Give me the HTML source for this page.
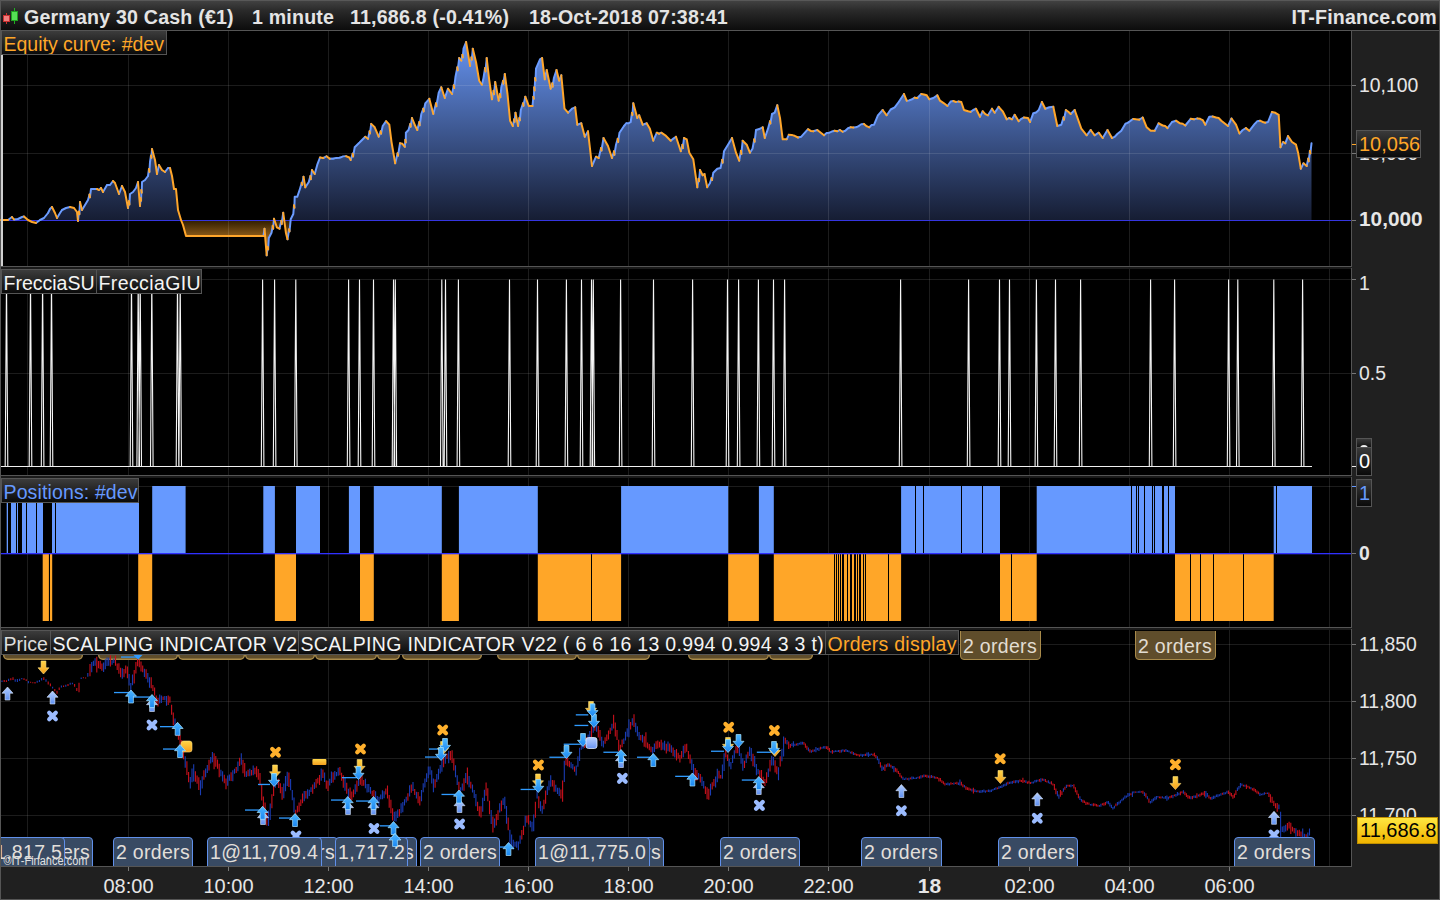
<!DOCTYPE html><html><head><meta charset="utf-8"><style>
*{box-sizing:border-box}
html,body{margin:0;padding:0}
body{width:1440px;height:900px;overflow:hidden;position:relative;background:#202020;font-family:"Liberation Sans",sans-serif}
.abs{position:absolute}
.ht{position:absolute;top:6px;font-weight:bold;font-size:19.6px;letter-spacing:0.2px;color:#e4e4e4;white-space:nowrap;line-height:22px}
.lbl{position:absolute;height:25px;background:linear-gradient(#3c3c3c,#0a0a0a);border:1px solid #555;font-size:19.5px;line-height:22px;white-space:nowrap;padding:2px 0 0 1.5px;overflow:hidden}
.ax{position:absolute;font-size:19.4px;color:#e6e6e6;white-space:nowrap;line-height:20px}
.ob{position:absolute;top:837px;height:40px;background:#384a63;border:1.4px solid #6090ea;border-radius:4px;font-size:19.5px;color:#e2dfda;line-height:29px;padding-left:2px;letter-spacing:0.3px;white-space:nowrap;overflow:hidden}
.tb{position:absolute;top:625px;height:35px;background:#5f4d2b;border:1.4px solid #a88a4a;border-radius:4px;font-size:19.5px;color:#e2ddd2;line-height:40px;padding-left:2px;letter-spacing:0.3px;white-space:nowrap;overflow:hidden}
.tl{position:absolute;top:876px;font-size:20px;color:#e6e6e6;line-height:20px;text-align:center;width:80px}
</style></head><body>

<svg class="abs" style="left:0;top:0" width="1440" height="900">
<defs>
<linearGradient id="hdrg" x1="0" y1="0" x2="0" y2="1"><stop offset="0" stop-color="#444"/><stop offset="0.35" stop-color="#2a2a2a"/><stop offset="1" stop-color="#0c0c0c"/></linearGradient>
<linearGradient id="gb" gradientUnits="userSpaceOnUse" x1="0" y1="42" x2="0" y2="220"><stop offset="0" stop-color="#6592ee"/><stop offset="1" stop-color="#161d33"/></linearGradient>
<linearGradient id="go" gradientUnits="userSpaceOnUse" x1="0" y1="220" x2="0" y2="238"><stop offset="0" stop-color="#2e1c00"/><stop offset="1" stop-color="#94601a"/></linearGradient>
<clipPath id="cabove"><rect x="0" y="0" width="1440" height="220.5"/></clipPath>
<clipPath id="cbelow"><rect x="0" y="220.5" width="1440" height="50"/></clipPath>
<clipPath id="p4"><rect x="1" y="631" width="1350" height="235"/></clipPath>
<linearGradient id="gup" x1="0" y1="0" x2="0" y2="1"><stop offset="0" stop-color="#b4cfff"/><stop offset="1" stop-color="#5f90f2"/></linearGradient>
<linearGradient id="gbr" x1="0" y1="0" x2="0" y2="1"><stop offset="0" stop-color="#4fb8ff"/><stop offset="1" stop-color="#1a86f2"/></linearGradient>
<linearGradient id="gor" x1="0" y1="0" x2="0" y2="1"><stop offset="0" stop-color="#ffd548"/><stop offset="1" stop-color="#f5a01e"/></linearGradient>
<linearGradient id="gsq" x1="0" y1="0" x2="0" y2="1"><stop offset="0" stop-color="#b8d0ff"/><stop offset="1" stop-color="#6a96f5"/></linearGradient>
<path id="aup" d="M0 -6.5 L5.5 -0.3 L2.4 -0.3 L2.4 6.5 L-2.4 6.5 L-2.4 -0.3 L-5.5 -0.3 Z"/>
<path id="adn" d="M0 6.5 L5.5 0.3 L2.4 0.3 L2.4 -6.5 L-2.4 -6.5 L-2.4 0.3 L-5.5 0.3 Z"/>
<path id="xx" d="M-3.3 -3.3 L3.3 3.3 M3.3 -3.3 L-3.3 3.3" stroke-width="4.2" stroke-linecap="round"/>
</defs>
<rect x="0" y="0" width="1440" height="30" fill="url(#hdrg)"/>
<rect x="0" y="0" width="1440" height="1" fill="#585858"/>
<rect x="0" y="30" width="1440" height="1" fill="#555"/>
<rect x="0" y="0" width="1" height="900" fill="#555"/><rect x="1439" y="0" width="1" height="900" fill="#555"/><rect x="0" y="899" width="1440" height="1" fill="#555"/>
<rect x="6" y="13" width="1" height="11" fill="#d03030"/><rect x="3.5" y="15.5" width="6" height="6" fill="#f08080" stroke="#c83030"/><rect x="14" y="8" width="1" height="16" fill="#20b020"/><rect x="11.5" y="11.5" width="6" height="9" fill="#55e055" stroke="#20a020"/>
<rect x="0.5" y="30.5" width="1351" height="236" fill="#000" stroke="#555" stroke-width="1"/>
<rect x="0.5" y="268.5" width="1351" height="207" fill="#000" stroke="#555" stroke-width="1"/>
<rect x="0.5" y="477.5" width="1351" height="150" fill="#000" stroke="#555" stroke-width="1"/>
<rect x="0.5" y="629.5" width="1351" height="237" fill="#000" stroke="#555" stroke-width="1"/>
<path d="M1,220.5 L1,220 5,220 8,220 12,217 14,219.5 18,219 22,217 24,216.5 28,220 32,222 36,223 40,220 42,219 44,218 48,213 50,209 52,207 55,213 57,218 60,213 62,210 66,208 70,207 74,208 77,212 78,221 80,202 82,210 85,205 88,200 91,189 95,189 97,189 99,190 101,188 103,192 107,185 110,185 113,181 115,183 119,194 122,186 125,192 128,208 130,194 133,192 136,188 138,182 140,206 142,182 145,180 148,176 150,162 152,149 155,160 157,174 159,165 162,170 165,172 168,168 170,168 172,176 174,189 176,189 178,210 181,220 183,225 186,236 263.5,236 264.5,228.7 266.7,255.3 268.8,238 271.5,232.7 274,218.8 276.8,227.3 279.5,228.7 283.2,212.7 285.9,232.7 287.5,239.3 290.7,219.3 293.3,214 294.7,196.7 297.3,196.7 300,188.7 303.5,176.7 305.3,187.3 308.8,182 312,170 314.7,174 317.3,164.7 320,157.5 349.3,157.5 350.7,160 354.7,147.3 360,142 365.3,136.7 368,138.8 371.2,123.9 374.7,127.3 378.7,136.7 382.7,126 386.1,121.2 389.3,124.7 391.5,142 395.2,163.3 400,143.3 404.8,146.8 405.9,132.7 408.5,130 412,118 414.7,124.7 417.3,130 421.3,114 425.3,103.3 429.3,98.8 433.3,114 438.7,92.7 441.3,87.3 444.8,98 448,88.7 452,94 455.5,76.7 459.2,58 461.3,60.7 463.5,48.7 466.1,42 470.1,66 472.8,48.7 476,62 479.2,80.7 481.9,84.7 483.5,78 486.7,58 489.3,80.7 492,99.3 495.2,82 498.7,100.7 501.3,87.3 504.8,74 507.5,94 510.1,120.7 512.8,126 515.5,112.7 518.1,126 520.8,110 525.3,96.7 528.8,106 532.5,106 536,68.7 540,59.3 542.1,58 544.8,79.3 546.7,70 550.7,88.7 553.9,78 556.5,70 559.2,80.7 561.3,75.3 564.5,108.7 568,112.7 572,108.7 575.2,107.3 577.3,124.7 581.3,123.3 584.8,136.7 588,131.3 592,166 596,156.7 598.7,158 603.5,138 608,146 612,158 616,144.7 619.5,132.7 624,126 628.5,123.3 630.7,122 633.3,103.3 637.3,118 639.2,115.3 642.7,124.7 646.7,123.3 649.9,128.7 653.3,140.7 656.8,132.7 661.3,132.7 665.3,135.3 670.7,140.7 676,136.7 680.8,151.3 684,138 686.7,139.3 689.3,152.7 693.3,159.3 697.3,187.3 700,170 702.7,175.3 704.5,174 707.2,187.3 709.9,183.3 713.3,172.7 717.3,168.7 720.5,168.1 724,151.3 728,144.7 732,138 736,152.7 739.2,160.7 742.7,140.7 746.7,144.7 749.9,152.7 752.5,148.7 756,130 760,128.7 762.7,127.3 764.8,138 768,128.7 772,114 774.7,112.7 777.3,105.2 780,118 782.7,139.3 786.7,139.3 788.8,134.8 794.7,135.9 801.3,136.7 808,129.2 813.3,131.3 817.3,130 824,135.3 829.3,132.7 837.3,131.3 845.3,130.8 850.7,127.3 856,127.3 864,123.9 869.3,127.3 874.1,124.7 877.9,115.3 882.7,110 886.7,115.3 890.7,109.5 894.7,107.3 898.7,102 904,94 906.7,100.7 912,99.3 917.3,98 921.3,94 926.7,95.3 929.3,99.3 933.3,98 937.3,95.3 940,100.7 944,103.3 947.5,106 950.7,101.5 956,102 961.3,102 964,110 968,111.3 973.3,110 976,108.7 980,116.7 982.7,111.3 988,115.3 992,108.7 994.7,112.7 998.7,106.8 1002.7,111.3 1006.7,119.3 1009.3,118 1012,119.3 1014.7,114.8 1018.7,121.2 1024,117.5 1028,118 1030.1,122 1033.3,113.2 1038.7,110 1041.9,102 1045.3,108.7 1049.3,107.3 1053.3,106.8 1057.3,126 1061.3,124.7 1065.9,110 1070.7,114 1074.7,110 1081.3,128.7 1086.7,135.3 1090.7,130 1094.7,135.3 1098.7,132.7 1102.7,138 1107.5,130 1112,138 1117.3,134 1121.3,130.8 1125.3,123.9 1130.7,120.7 1136,119.3 1142.7,117.5 1146.7,127.3 1150.7,130.8 1154.7,130.8 1158.7,123.3 1162.7,125.5 1167.5,128.1 1172,122 1176,120.7 1180,123.3 1185.3,125.5 1190.7,118.8 1197.3,118.5 1202.7,120.1 1205.3,124.7 1209.3,116.7 1216,117.5 1221.3,120.7 1228,126 1231.5,118.5 1236,124.7 1239.5,133.5 1242.7,130 1245.9,128.1 1249.3,130.8 1254.7,123.9 1260,120.7 1265.3,122.8 1268,122 1272,112.1 1278.7,114.8 1280.5,147.3 1283.2,142 1285.3,143.3 1288,136.1 1292,142 1296,144.7 1298.1,152.7 1300.8,168.7 1303.5,163.3 1306.7,166 1311.5,143.3 L1311.5,220.5 Z" fill="url(#gb)" clip-path="url(#cabove)"/>
<path d="M1,220.5 L1,220 5,220 8,220 12,217 14,219.5 18,219 22,217 24,216.5 28,220 32,222 36,223 40,220 42,219 44,218 48,213 50,209 52,207 55,213 57,218 60,213 62,210 66,208 70,207 74,208 77,212 78,221 80,202 82,210 85,205 88,200 91,189 95,189 97,189 99,190 101,188 103,192 107,185 110,185 113,181 115,183 119,194 122,186 125,192 128,208 130,194 133,192 136,188 138,182 140,206 142,182 145,180 148,176 150,162 152,149 155,160 157,174 159,165 162,170 165,172 168,168 170,168 172,176 174,189 176,189 178,210 181,220 183,225 186,236 263.5,236 264.5,228.7 266.7,255.3 268.8,238 271.5,232.7 274,218.8 276.8,227.3 279.5,228.7 283.2,212.7 285.9,232.7 287.5,239.3 290.7,219.3 293.3,214 294.7,196.7 297.3,196.7 300,188.7 303.5,176.7 305.3,187.3 308.8,182 312,170 314.7,174 317.3,164.7 320,157.5 349.3,157.5 350.7,160 354.7,147.3 360,142 365.3,136.7 368,138.8 371.2,123.9 374.7,127.3 378.7,136.7 382.7,126 386.1,121.2 389.3,124.7 391.5,142 395.2,163.3 400,143.3 404.8,146.8 405.9,132.7 408.5,130 412,118 414.7,124.7 417.3,130 421.3,114 425.3,103.3 429.3,98.8 433.3,114 438.7,92.7 441.3,87.3 444.8,98 448,88.7 452,94 455.5,76.7 459.2,58 461.3,60.7 463.5,48.7 466.1,42 470.1,66 472.8,48.7 476,62 479.2,80.7 481.9,84.7 483.5,78 486.7,58 489.3,80.7 492,99.3 495.2,82 498.7,100.7 501.3,87.3 504.8,74 507.5,94 510.1,120.7 512.8,126 515.5,112.7 518.1,126 520.8,110 525.3,96.7 528.8,106 532.5,106 536,68.7 540,59.3 542.1,58 544.8,79.3 546.7,70 550.7,88.7 553.9,78 556.5,70 559.2,80.7 561.3,75.3 564.5,108.7 568,112.7 572,108.7 575.2,107.3 577.3,124.7 581.3,123.3 584.8,136.7 588,131.3 592,166 596,156.7 598.7,158 603.5,138 608,146 612,158 616,144.7 619.5,132.7 624,126 628.5,123.3 630.7,122 633.3,103.3 637.3,118 639.2,115.3 642.7,124.7 646.7,123.3 649.9,128.7 653.3,140.7 656.8,132.7 661.3,132.7 665.3,135.3 670.7,140.7 676,136.7 680.8,151.3 684,138 686.7,139.3 689.3,152.7 693.3,159.3 697.3,187.3 700,170 702.7,175.3 704.5,174 707.2,187.3 709.9,183.3 713.3,172.7 717.3,168.7 720.5,168.1 724,151.3 728,144.7 732,138 736,152.7 739.2,160.7 742.7,140.7 746.7,144.7 749.9,152.7 752.5,148.7 756,130 760,128.7 762.7,127.3 764.8,138 768,128.7 772,114 774.7,112.7 777.3,105.2 780,118 782.7,139.3 786.7,139.3 788.8,134.8 794.7,135.9 801.3,136.7 808,129.2 813.3,131.3 817.3,130 824,135.3 829.3,132.7 837.3,131.3 845.3,130.8 850.7,127.3 856,127.3 864,123.9 869.3,127.3 874.1,124.7 877.9,115.3 882.7,110 886.7,115.3 890.7,109.5 894.7,107.3 898.7,102 904,94 906.7,100.7 912,99.3 917.3,98 921.3,94 926.7,95.3 929.3,99.3 933.3,98 937.3,95.3 940,100.7 944,103.3 947.5,106 950.7,101.5 956,102 961.3,102 964,110 968,111.3 973.3,110 976,108.7 980,116.7 982.7,111.3 988,115.3 992,108.7 994.7,112.7 998.7,106.8 1002.7,111.3 1006.7,119.3 1009.3,118 1012,119.3 1014.7,114.8 1018.7,121.2 1024,117.5 1028,118 1030.1,122 1033.3,113.2 1038.7,110 1041.9,102 1045.3,108.7 1049.3,107.3 1053.3,106.8 1057.3,126 1061.3,124.7 1065.9,110 1070.7,114 1074.7,110 1081.3,128.7 1086.7,135.3 1090.7,130 1094.7,135.3 1098.7,132.7 1102.7,138 1107.5,130 1112,138 1117.3,134 1121.3,130.8 1125.3,123.9 1130.7,120.7 1136,119.3 1142.7,117.5 1146.7,127.3 1150.7,130.8 1154.7,130.8 1158.7,123.3 1162.7,125.5 1167.5,128.1 1172,122 1176,120.7 1180,123.3 1185.3,125.5 1190.7,118.8 1197.3,118.5 1202.7,120.1 1205.3,124.7 1209.3,116.7 1216,117.5 1221.3,120.7 1228,126 1231.5,118.5 1236,124.7 1239.5,133.5 1242.7,130 1245.9,128.1 1249.3,130.8 1254.7,123.9 1260,120.7 1265.3,122.8 1268,122 1272,112.1 1278.7,114.8 1280.5,147.3 1283.2,142 1285.3,143.3 1288,136.1 1292,142 1296,144.7 1298.1,152.7 1300.8,168.7 1303.5,163.3 1306.7,166 1311.5,143.3 L1311.5,220.5 Z" fill="url(#go)" clip-path="url(#cbelow)"/>
<rect x="1" y="267" width="1350" height="2" fill="#1a1a1a"/><rect x="1" y="476" width="1350" height="2" fill="#1a1a1a"/><rect x="1" y="628" width="1350" height="2" fill="#1a1a1a"/>
<rect x="27" y="31" width="1" height="235" fill="rgba(255,255,255,0.11)"/>
<rect x="27" y="269" width="1" height="206" fill="rgba(255,255,255,0.11)"/>
<rect x="27" y="478" width="1" height="149" fill="rgba(255,255,255,0.11)"/>
<rect x="27" y="630" width="1" height="236" fill="rgba(255,255,255,0.11)"/>
<rect x="128" y="31" width="1" height="235" fill="rgba(255,255,255,0.11)"/>
<rect x="128" y="269" width="1" height="206" fill="rgba(255,255,255,0.11)"/>
<rect x="128" y="478" width="1" height="149" fill="rgba(255,255,255,0.11)"/>
<rect x="128" y="630" width="1" height="236" fill="rgba(255,255,255,0.11)"/>
<rect x="128" y="867" width="1" height="4" fill="#777"/>
<rect x="228" y="31" width="1" height="235" fill="rgba(255,255,255,0.11)"/>
<rect x="228" y="269" width="1" height="206" fill="rgba(255,255,255,0.11)"/>
<rect x="228" y="478" width="1" height="149" fill="rgba(255,255,255,0.11)"/>
<rect x="228" y="630" width="1" height="236" fill="rgba(255,255,255,0.11)"/>
<rect x="228" y="867" width="1" height="4" fill="#777"/>
<rect x="328" y="31" width="1" height="235" fill="rgba(255,255,255,0.11)"/>
<rect x="328" y="269" width="1" height="206" fill="rgba(255,255,255,0.11)"/>
<rect x="328" y="478" width="1" height="149" fill="rgba(255,255,255,0.11)"/>
<rect x="328" y="630" width="1" height="236" fill="rgba(255,255,255,0.11)"/>
<rect x="328" y="867" width="1" height="4" fill="#777"/>
<rect x="428" y="31" width="1" height="235" fill="rgba(255,255,255,0.11)"/>
<rect x="428" y="269" width="1" height="206" fill="rgba(255,255,255,0.11)"/>
<rect x="428" y="478" width="1" height="149" fill="rgba(255,255,255,0.11)"/>
<rect x="428" y="630" width="1" height="236" fill="rgba(255,255,255,0.11)"/>
<rect x="428" y="867" width="1" height="4" fill="#777"/>
<rect x="528" y="31" width="1" height="235" fill="rgba(255,255,255,0.11)"/>
<rect x="528" y="269" width="1" height="206" fill="rgba(255,255,255,0.11)"/>
<rect x="528" y="478" width="1" height="149" fill="rgba(255,255,255,0.11)"/>
<rect x="528" y="630" width="1" height="236" fill="rgba(255,255,255,0.11)"/>
<rect x="528" y="867" width="1" height="4" fill="#777"/>
<rect x="628" y="31" width="1" height="235" fill="rgba(255,255,255,0.11)"/>
<rect x="628" y="269" width="1" height="206" fill="rgba(255,255,255,0.11)"/>
<rect x="628" y="478" width="1" height="149" fill="rgba(255,255,255,0.11)"/>
<rect x="628" y="630" width="1" height="236" fill="rgba(255,255,255,0.11)"/>
<rect x="628" y="867" width="1" height="4" fill="#777"/>
<rect x="728" y="31" width="1" height="235" fill="rgba(255,255,255,0.11)"/>
<rect x="728" y="269" width="1" height="206" fill="rgba(255,255,255,0.11)"/>
<rect x="728" y="478" width="1" height="149" fill="rgba(255,255,255,0.11)"/>
<rect x="728" y="630" width="1" height="236" fill="rgba(255,255,255,0.11)"/>
<rect x="728" y="867" width="1" height="4" fill="#777"/>
<rect x="828" y="31" width="1" height="235" fill="rgba(255,255,255,0.11)"/>
<rect x="828" y="269" width="1" height="206" fill="rgba(255,255,255,0.11)"/>
<rect x="828" y="478" width="1" height="149" fill="rgba(255,255,255,0.11)"/>
<rect x="828" y="630" width="1" height="236" fill="rgba(255,255,255,0.11)"/>
<rect x="828" y="867" width="1" height="4" fill="#777"/>
<rect x="929" y="31" width="1" height="235" fill="rgba(255,255,255,0.11)"/>
<rect x="929" y="269" width="1" height="206" fill="rgba(255,255,255,0.11)"/>
<rect x="929" y="478" width="1" height="149" fill="rgba(255,255,255,0.11)"/>
<rect x="929" y="630" width="1" height="236" fill="rgba(255,255,255,0.11)"/>
<rect x="929" y="867" width="1" height="4" fill="#777"/>
<rect x="1029" y="31" width="1" height="235" fill="rgba(255,255,255,0.11)"/>
<rect x="1029" y="269" width="1" height="206" fill="rgba(255,255,255,0.11)"/>
<rect x="1029" y="478" width="1" height="149" fill="rgba(255,255,255,0.11)"/>
<rect x="1029" y="630" width="1" height="236" fill="rgba(255,255,255,0.11)"/>
<rect x="1029" y="867" width="1" height="4" fill="#777"/>
<rect x="1129" y="31" width="1" height="235" fill="rgba(255,255,255,0.11)"/>
<rect x="1129" y="269" width="1" height="206" fill="rgba(255,255,255,0.11)"/>
<rect x="1129" y="478" width="1" height="149" fill="rgba(255,255,255,0.11)"/>
<rect x="1129" y="630" width="1" height="236" fill="rgba(255,255,255,0.11)"/>
<rect x="1129" y="867" width="1" height="4" fill="#777"/>
<rect x="1229" y="31" width="1" height="235" fill="rgba(255,255,255,0.11)"/>
<rect x="1229" y="269" width="1" height="206" fill="rgba(255,255,255,0.11)"/>
<rect x="1229" y="478" width="1" height="149" fill="rgba(255,255,255,0.11)"/>
<rect x="1229" y="630" width="1" height="236" fill="rgba(255,255,255,0.11)"/>
<rect x="1229" y="867" width="1" height="4" fill="#777"/>
<rect x="1329" y="31" width="1" height="235" fill="rgba(255,255,255,0.11)"/>
<rect x="1329" y="269" width="1" height="206" fill="rgba(255,255,255,0.11)"/>
<rect x="1329" y="478" width="1" height="149" fill="rgba(255,255,255,0.11)"/>
<rect x="1329" y="630" width="1" height="236" fill="rgba(255,255,255,0.11)"/>
<rect x="1" y="85" width="1350" height="1" fill="rgba(255,255,255,0.11)"/>
<rect x="1" y="153" width="1350" height="1" fill="rgba(255,255,255,0.11)"/>
<rect x="1" y="279" width="1350" height="1" fill="rgba(255,255,255,0.11)"/>
<rect x="1" y="373" width="1350" height="1" fill="rgba(255,255,255,0.11)"/>
<rect x="1" y="486" width="1350" height="1" fill="rgba(255,255,255,0.11)"/>
<rect x="1" y="644" width="1350" height="1" fill="rgba(255,255,255,0.11)"/>
<rect x="1" y="701" width="1350" height="1" fill="rgba(255,255,255,0.11)"/>
<rect x="1" y="758" width="1350" height="1" fill="rgba(255,255,255,0.11)"/>
<rect x="1" y="815" width="1350" height="1" fill="rgba(255,255,255,0.11)"/>
<rect x="1352" y="85" width="4" height="1" fill="#777"/>
<rect x="1352" y="153" width="4" height="1" fill="#777"/>
<rect x="1352" y="220" width="4" height="1" fill="#777"/>
<rect x="1352" y="279" width="4" height="1" fill="#777"/>
<rect x="1352" y="373" width="4" height="1" fill="#777"/>
<rect x="1352" y="466" width="4" height="1" fill="#777"/>
<rect x="1352" y="553" width="4" height="1" fill="#777"/>
<rect x="1352" y="644" width="4" height="1" fill="#777"/>
<rect x="1352" y="701" width="4" height="1" fill="#777"/>
<rect x="1352" y="758" width="4" height="1" fill="#777"/>
<rect x="1352" y="815" width="4" height="1" fill="#777"/>
<rect x="1" y="220" width="1350" height="1" fill="#3535e0"/>
<path d="M8 220L12 217M14 219.5L18 219M18 219L22 217M22 217L24 216.5M36 223L40 220M40 220L42 219M42 219L44 218M44 218L48 213M48 213L50 209M50 209L52 207M57 218L60 213M60 213L62 210M62 210L66 208M66 208L70 207M78 221L79 211.5M79.4 214.18L80 202M82 210L85 205M85 205L88 200M88 200L89.5 194.5M89.9 197.34L91 189M91 189L95 189M95 189L97 189M99 190L101 188M103 192L107 185M107 185L110 185M110 185L113 181M119 194L122 186M128 208L129 201M129.4 204.39L130 194M130 194L133 192M133 192L136 188M136 188L138 182M140 206L140.67 198M141.07 200.7L141.33 190M141.73 192.76L142 182M142 182L145 180M145 180L148 176M148 176L149 169M149.4 171.88L150 162M150 162L151 155.5M151.4 157.78L152 149M157 174L159 165M165 172L168 168M168 168L170 168M263.5 236L264.5 228.7M266.7 255.3L267.75 246.65M268.15 249.42L268.8 238M268.8 238L271.5 232.7M271.5 232.7L272.75 225.75M273.15 228.69L274 218.8M279.5 228.7L281.35 220.7M281.75 223.89L283.2 212.7M287.5 239.3L289.1 229.3M289.5 231.44L290.7 219.3M290.7 219.3L293.3 214M293.3 214L294 205.35M294.4 207.81L294.7 196.7M294.7 196.7L297.3 196.7M297.3 196.7L300 188.7M300 188.7L301.75 182.7M302.15 184.84L303.5 176.7M305.3 187.3L308.8 182M308.8 182L310.4 176M310.8 179.21L312 170M314.7 174L317.3 164.7M317.3 164.7L320 157.5M323.26 158L326.51 156.31M329.77 158.75L333.02 158.71M333.02 158.71L336.28 157.9M336.28 157.9L339.53 157.8M339.53 157.8L342.79 156.61M342.79 156.61L346.04 156.24M350.7 160L352.7 153.65M353.1 156.44L354.7 147.3M354.7 147.3L360 142M360 142L365.3 136.7M368 138.8L369.6 131.35M370 133.44L371.2 123.9M378.7 136.7L380.7 131.35M381.1 133.64L382.7 126M382.7 126L386.1 121.2M395.2 163.3L397.6 153.3M398 155.66L400 143.3M404.8 146.8L405.35 139.75M405.75 142.45L405.9 132.7M405.9 132.7L408.5 130M408.5 130L410.25 124M410.65 126.66L412 118M417.3 130L419.3 122M419.7 125.26L421.3 114M421.3 114L423.3 108.65M423.7 111.43L425.3 103.3M425.3 103.3L429.3 98.8M433.3 114L436 103.35M436.4 106.31L438.7 92.7M438.7 92.7L441.3 87.3M444.8 98L448 88.7M452 94L453.75 85.35M454.15 88.1L455.5 76.7M455.5 76.7L457.35 67.35M457.75 70.34L459.2 58M461.3 60.7L462.4 54.7M462.8 57.39L463.5 48.7M463.5 48.7L466.1 42M470.1 66L471.45 57.35M471.85 59.77L472.8 48.7M481.9 84.7L483.5 78M483.5 78L485.1 68M485.5 71.5L486.7 58M492 99.3L493.6 90.65M494 94.14L495.2 82M498.7 100.7L500 94M500.4 97.26L501.3 87.3M501.3 87.3L503.05 80.65M503.45 83.71L504.8 74M512.8 126L514.15 119.35M514.55 121.82L515.5 112.7M518.1 126L519.45 118M519.85 120.34L520.8 110M520.8 110L523.05 103.35M523.45 105.78L525.3 96.7M532.5 106L533.38 96.67M533.77 98.78L534.25 87.35M534.65 90.5L535.12 78.03M535.52 80.63L536 68.7M536 68.7L540 59.3M540 59.3L542.1 58M544.8 79.3L546.7 70M550.7 88.7L552.3 83.35M552.7 86.62L553.9 78M553.9 78L556.5 70M559.2 80.7L561.3 75.3M568 112.7L572 108.7M572 108.7L575.2 107.3M577.3 124.7L581.3 123.3M584.8 136.7L588 131.3M592 166L596 156.7M598.7 158L601.1 148M601.5 150.58L603.5 138M612 158L614 151.35M614.4 154.79L616 144.7M616 144.7L617.75 138.7M618.15 141.97L619.5 132.7M619.5 132.7L624 126M624 126L626.25 123.35M626.25 123.35L628.5 123.3M628.5 123.3L630.7 122M630.7 122L632 112.65M632.4 114.96L633.3 103.3M637.3 118L639.2 115.3M642.7 124.7L646.7 123.3M653.3 140.7L656.8 132.7M659.05 133.77L661.3 132.7M670.7 140.7L673.35 138.62M673.35 138.62L676 136.7M680.8 151.3L682.4 144.65M682.8 148.12L684 138M697.3 187.3L698.65 178.65M699.05 181.25L700 170M702.7 175.3L704.5 174M707.2 187.3L709.9 183.3M709.9 183.3L711.6 178M712 180.11L713.3 172.7M713.3 172.7L717.3 168.7M717.3 168.7L720.5 168.1M720.5 168.1L722.25 159.7M722.65 162.64L724 151.3M724 151.3L728 144.7M728 144.7L732 138M739.2 160.7L740.95 150.7M741.35 153.87L742.7 140.7M749.9 152.7L752.5 148.7M752.5 148.7L754.25 139.35M754.65 141.75L756 130M756 130L760 128.7M760 128.7L762.7 127.3M764.8 138L768 128.7M768 128.7L770 121.35M770.4 123.48L772 114M772 114L774.7 112.7M774.7 112.7L777.3 105.2M786.7 139.3L788.8 134.8M798 137.51L801.3 136.7M801.3 136.7L808 129.2M813.3 131.3L817.3 130M824 135.3L826.65 133.01M826.65 133.01L829.3 132.7M829.3 132.7L831.97 131.57M831.97 131.57L834.63 130.73M837.3 131.3L839.97 129.99M842.63 131.74L845.3 130.8M845.3 130.8L848 128.21M848 128.21L850.7 127.3M853.35 127.45L856 127.3M856 127.3L858.67 126.03M858.67 126.03L861.33 124.23M861.33 124.23L864 123.9M869.3 127.3L871.7 125.04M871.7 125.04L874.1 124.7M874.1 124.7L877.9 115.3M877.9 115.3L882.7 110M886.7 115.3L890.7 109.5M890.7 109.5L894.7 107.3M894.7 107.3L898.7 102M898.7 102L904 94M906.7 100.7L909.35 100.37M909.35 100.37L912 99.3M912 99.3L914.65 97.65M917.3 98L921.3 94M929.3 99.3L933.3 98M933.3 98L937.3 95.3M947.5 106L950.7 101.5M950.7 101.5L953.35 101M956 102L958.65 101.4M970.65 111.87L973.3 110M973.3 110L976 108.7M980 116.7L982.7 111.3M988 115.3L992 108.7M994.7 112.7L998.7 106.8M1006.7 119.3L1009.3 118M1012 119.3L1014.7 114.8M1018.7 121.2L1021.35 118.84M1021.35 118.84L1024 117.5M1030.1 122L1033.3 113.2M1033.3 113.2L1036 112.6M1036 112.6L1038.7 110M1038.7 110L1041.9 102M1045.3 108.7L1049.3 107.3M1049.3 107.3L1053.3 106.8M1057.3 126L1061.3 124.7M1061.3 124.7L1063.6 117.35M1064 119.67L1065.9 110M1070.7 114L1074.7 110M1086.7 135.3L1090.7 130M1094.7 135.3L1098.7 132.7M1102.7 138L1107.5 130M1112 138L1114.65 136.92M1114.65 136.92L1117.3 134M1117.3 134L1121.3 130.8M1121.3 130.8L1125.3 123.9M1125.3 123.9L1128 122.67M1128 122.67L1130.7 120.7M1130.7 120.7L1133.35 118.96M1139.35 119.67L1142.7 117.5M1154.7 130.8L1158.7 123.3M1167.5 128.1L1172 122M1172 122L1176 120.7M1185.3 125.5L1190.7 118.8M1194 119.36L1197.3 118.5M1205.3 124.7L1209.3 116.7M1209.3 116.7L1212.65 116.57M1228 126L1231.5 118.5M1239.5 133.5L1242.7 130M1242.7 130L1245.9 128.1M1249.3 130.8L1254.7 123.9M1254.7 123.9L1257.35 121.23M1257.35 121.23L1260 120.7M1265.3 122.8L1268 122M1268 122L1272 112.1M1280.5 147.3L1283.2 142M1285.3 143.3L1288 136.1M1300.8 168.7L1303.5 163.3M1306.7 166L1308.3 158.43M1308.7 161.34L1309.9 150.87M1310.3 153.42L1311.5 143.3" stroke="#6b9cff" stroke-width="2" fill="none" stroke-linecap="round"/>
<path d="M1 220L5 220M5 220L8 220M12 217L14 219.5M24 216.5L28 220M28 220L32 222M32 222L36 223M52 207L55 213M55 213L57 218M70 207L74 208M74 208L77 212M77 212L78 221M79 211.5L79.4 214.18M80 202L82 210M89.5 194.5L89.9 197.34M97 189L99 190M101 188L103 192M113 181L115 183M115 183L119 194M122 186L125 192M125 192L128 208M129 201L129.4 204.39M138 182L140 206M140.67 198L141.07 200.7M141.33 190L141.73 192.76M149 169L149.4 171.88M151 155.5L151.4 157.78M152 149L155 160M155 160L157 174M159 165L162 170M162 170L165 172M170 168L172 176M172 176L174 189M174 189L176 189M176 189L178 210M178 210L181 220M181 220L183 225M183 225L186 236M186 236L263.5 236M264.5 228.7L266.7 255.3M267.75 246.65L268.15 249.42M272.75 225.75L273.15 228.69M274 218.8L276.8 227.3M276.8 227.3L279.5 228.7M281.35 220.7L281.75 223.89M283.2 212.7L285.9 232.7M285.9 232.7L287.5 239.3M289.1 229.3L289.5 231.44M294 205.35L294.4 207.81M301.75 182.7L302.15 184.84M303.5 176.7L305.3 187.3M310.4 176L310.8 179.21M312 170L314.7 174M320 157.5L323.26 158M326.51 156.31L329.77 158.75M346.04 156.24L349.3 157.5M349.3 157.5L350.7 160M352.7 153.65L353.1 156.44M365.3 136.7L368 138.8M369.6 131.35L370 133.44M371.2 123.9L374.7 127.3M374.7 127.3L378.7 136.7M380.7 131.35L381.1 133.64M386.1 121.2L389.3 124.7M389.3 124.7L391.5 142M391.5 142L395.2 163.3M397.6 153.3L398 155.66M400 143.3L402.4 143.83M402.4 143.83L404.8 146.8M405.35 139.75L405.75 142.45M410.25 124L410.65 126.66M412 118L414.7 124.7M414.7 124.7L417.3 130M419.3 122L419.7 125.26M423.3 108.65L423.7 111.43M429.3 98.8L433.3 114M436 103.35L436.4 106.31M441.3 87.3L444.8 98M448 88.7L452 94M453.75 85.35L454.15 88.1M457.35 67.35L457.75 70.34M459.2 58L461.3 60.7M462.4 54.7L462.8 57.39M466.1 42L470.1 66M471.45 57.35L471.85 59.77M472.8 48.7L476 62M476 62L479.2 80.7M479.2 80.7L481.9 84.7M485.1 68L485.5 71.5M486.7 58L489.3 80.7M489.3 80.7L492 99.3M493.6 90.65L494 94.14M495.2 82L498.7 100.7M500 94L500.4 97.26M503.05 80.65L503.45 83.71M504.8 74L507.5 94M507.5 94L510.1 120.7M510.1 120.7L512.8 126M514.15 119.35L514.55 121.82M515.5 112.7L518.1 126M519.45 118L519.85 120.34M523.05 103.35L523.45 105.78M525.3 96.7L528.8 106M528.8 106L532.5 106M533.38 96.67L533.77 98.78M534.25 87.35L534.65 90.5M535.12 78.03L535.52 80.63M542.1 58L544.8 79.3M546.7 70L550.7 88.7M552.3 83.35L552.7 86.62M556.5 70L559.2 80.7M561.3 75.3L564.5 108.7M564.5 108.7L568 112.7M575.2 107.3L577.3 124.7M581.3 123.3L584.8 136.7M588 131.3L592 166M596 156.7L598.7 158M601.1 148L601.5 150.58M603.5 138L608 146M608 146L612 158M614 151.35L614.4 154.79M617.75 138.7L618.15 141.97M632 112.65L632.4 114.96M633.3 103.3L637.3 118M639.2 115.3L642.7 124.7M646.7 123.3L649.9 128.7M649.9 128.7L653.3 140.7M656.8 132.7L659.05 133.77M661.3 132.7L665.3 135.3M665.3 135.3L670.7 140.7M676 136.7L680.8 151.3M682.4 144.65L682.8 148.12M684 138L686.7 139.3M686.7 139.3L689.3 152.7M689.3 152.7L693.3 159.3M693.3 159.3L697.3 187.3M698.65 178.65L699.05 181.25M700 170L702.7 175.3M704.5 174L707.2 187.3M711.6 178L712 180.11M722.25 159.7L722.65 162.64M732 138L736 152.7M736 152.7L739.2 160.7M740.95 150.7L741.35 153.87M742.7 140.7L746.7 144.7M746.7 144.7L749.9 152.7M754.25 139.35L754.65 141.75M762.7 127.3L764.8 138M770 121.35L770.4 123.48M777.3 105.2L780 118M780 118L782.7 139.3M782.7 139.3L786.7 139.3M788.8 134.8L791.75 134.91M791.75 134.91L794.7 135.9M794.7 135.9L798 137.51M808 129.2L810.65 130.92M810.65 130.92L813.3 131.3M817.3 130L824 135.3M834.63 130.73L837.3 131.3M839.97 129.99L842.63 131.74M850.7 127.3L853.35 127.45M864 123.9L866.65 126.2M866.65 126.2L869.3 127.3M882.7 110L886.7 115.3M904 94L906.7 100.7M914.65 97.65L917.3 98M921.3 94L924 94.44M924 94.44L926.7 95.3M926.7 95.3L929.3 99.3M937.3 95.3L940 100.7M940 100.7L944 103.3M944 103.3L947.5 106M953.35 101L956 102M958.65 101.4L961.3 102M961.3 102L964 110M964 110L968 111.3M968 111.3L970.65 111.87M976 108.7L980 116.7M982.7 111.3L985.35 114.09M985.35 114.09L988 115.3M992 108.7L994.7 112.7M998.7 106.8L1002.7 111.3M1002.7 111.3L1006.7 119.3M1009.3 118L1012 119.3M1014.7 114.8L1018.7 121.2M1024 117.5L1028 118M1028 118L1030.1 122M1041.9 102L1045.3 108.7M1053.3 106.8L1057.3 126M1063.6 117.35L1064 119.67M1065.9 110L1068.3 111.73M1068.3 111.73L1070.7 114M1074.7 110L1081.3 128.7M1081.3 128.7L1086.7 135.3M1090.7 130L1094.7 135.3M1098.7 132.7L1102.7 138M1107.5 130L1112 138M1133.35 118.96L1136 119.3M1136 119.3L1139.35 119.67M1142.7 117.5L1146.7 127.3M1146.7 127.3L1150.7 130.8M1150.7 130.8L1154.7 130.8M1158.7 123.3L1162.7 125.5M1162.7 125.5L1165.1 126.05M1165.1 126.05L1167.5 128.1M1176 120.7L1180 123.3M1180 123.3L1182.65 123.77M1182.65 123.77L1185.3 125.5M1190.7 118.8L1194 119.36M1197.3 118.5L1200 118.86M1200 118.86L1202.7 120.1M1202.7 120.1L1205.3 124.7M1212.65 116.57L1216 117.5M1216 117.5L1218.65 117.99M1218.65 117.99L1221.3 120.7M1221.3 120.7L1228 126M1231.5 118.5L1236 124.7M1236 124.7L1239.5 133.5M1245.9 128.1L1249.3 130.8M1260 120.7L1262.65 121.97M1262.65 121.97L1265.3 122.8M1272 112.1L1275.35 112.78M1275.35 112.78L1278.7 114.8M1278.7 114.8L1280.5 147.3M1283.2 142L1285.3 143.3M1288 136.1L1292 142M1292 142L1296 144.7M1296 144.7L1298.1 152.7M1298.1 152.7L1300.8 168.7M1303.5 163.3L1306.7 166M1308.3 158.43L1308.7 161.34M1309.9 150.87L1310.3 153.42" stroke="#ffa62b" stroke-width="2" fill="none" stroke-linecap="round"/>
<rect x="1" y="55" width="2" height="211" fill="#d0d0d0"/>
<rect x="1352" y="144" width="4" height="1" fill="#ffa628"/>
<path d="M5.2 466.5L6.5 279.5L7.8 466.5M29.2 466.5L30.5 279.5L31.8 466.5M41.3 466.5L42.6 279.5L43.9 466.5M50.2 466.5L51.5 279.5L52.8 466.5M130.2 466.5L131.5 279.5L132.8 466.5M136.9 466.5L138.2 279.5L139.5 466.5M138.9 466.5L140.2 279.5L141.5 466.5M150.5 466.5L151.8 279.5L153.1 466.5M176.2 466.5L177.5 279.5L178.8 466.5M178.9 466.5L180.2 279.5L181.5 466.5M261.3 466.5L262.6 279.5L263.9 466.5M273.3 466.5L274.6 279.5L275.9 466.5M294.5 466.5L295.8 279.5L297.1 466.5M347.3 466.5L348.6 279.5L349.9 466.5M358.2 466.5L359.5 279.5L360.8 466.5M372.2 466.5L373.5 279.5L374.8 466.5M392.2 466.5L393.5 279.5L394.8 466.5M394 466.5L395.3 279.5L396.6 466.5M440.5 466.5L441.8 279.5L443.1 466.5M444.2 466.5L445.5 279.5L446.8 466.5M457.1 466.5L458.4 279.5L459.7 466.5M508.2 466.5L509.5 279.5L510.8 466.5M536.2 466.5L537.5 279.5L538.8 466.5M565.1 466.5L566.4 279.5L567.7 466.5M580.2 466.5L581.5 279.5L582.8 466.5M590.2 466.5L591.5 279.5L592.8 466.5M592 466.5L593.3 279.5L594.6 466.5M619.3 466.5L620.6 279.5L621.9 466.5M652.2 466.5L653.5 279.5L654.8 466.5M691.3 466.5L692.6 279.5L693.9 466.5M726.2 466.5L727.5 279.5L728.8 466.5M737.3 466.5L738.6 279.5L739.9 466.5M757.1 466.5L758.4 279.5L759.7 466.5M772.2 466.5L773.5 279.5L774.8 466.5M783.3 466.5L784.6 279.5L785.9 466.5M899.3 466.5L900.6 279.5L901.9 466.5M967.3 466.5L968.6 279.5L969.9 466.5M998.2 466.5L999.5 279.5L1000.8 466.5M1008.2 466.5L1009.5 279.5L1010.8 466.5M1035.1 466.5L1036.4 279.5L1037.7 466.5M1054.2 466.5L1055.5 279.5L1056.8 466.5M1079.3 466.5L1080.6 279.5L1081.9 466.5M1149.3 466.5L1150.6 279.5L1151.9 466.5M1173.3 466.5L1174.6 279.5L1175.9 466.5M1227.3 466.5L1228.6 279.5L1229.9 466.5M1236.5 466.5L1237.8 279.5L1239.1 466.5M1272.5 466.5L1273.8 279.5L1275.1 466.5M1301.3 466.5L1302.6 279.5L1303.9 466.5" stroke="#f6f6f6" stroke-width="1.1" fill="none"/>
<rect x="1" y="466" width="1311" height="1" fill="#f0f0f0"/>
<rect x="1352" y="466" width="4" height="1" fill="#eee"/>
<rect x="6.7" y="486" width="1.3" height="67.5" fill="#6699ff"/>
<rect x="11" y="486" width="5" height="67.5" fill="#6699ff"/>
<rect x="17" y="486" width="1" height="67.5" fill="#6699ff"/>
<rect x="22" y="486" width="4" height="67.5" fill="#6699ff"/>
<rect x="27" y="486" width="9" height="67.5" fill="#6699ff"/>
<rect x="37" y="486" width="6" height="67.5" fill="#6699ff"/>
<rect x="52" y="486" width="3" height="67.5" fill="#6699ff"/>
<rect x="56" y="486" width="83" height="67.5" fill="#6699ff"/>
<rect x="152.2" y="486" width="33.4" height="67.5" fill="#6699ff"/>
<rect x="263.3" y="486" width="11.6" height="67.5" fill="#6699ff"/>
<rect x="296" y="486" width="24" height="67.5" fill="#6699ff"/>
<rect x="348.9" y="486" width="11.1" height="67.5" fill="#6699ff"/>
<rect x="373.8" y="486" width="68" height="67.5" fill="#6699ff"/>
<rect x="458.9" y="486" width="78.9" height="67.5" fill="#6699ff"/>
<rect x="621.1" y="486" width="107.1" height="67.5" fill="#6699ff"/>
<rect x="758.9" y="486" width="14.9" height="67.5" fill="#6699ff"/>
<rect x="901.1" y="486" width="98.9" height="67.5" fill="#6699ff"/>
<rect x="1036.7" y="486" width="138.3" height="67.5" fill="#6699ff"/>
<rect x="1273.7" y="486" width="38.3" height="67.5" fill="#6699ff"/>
<rect x="42.7" y="553.5" width="6.2" height="67.5" fill="#ffa628"/>
<rect x="50" y="553.5" width="2.2" height="67.5" fill="#ffa628"/>
<rect x="138.2" y="553.5" width="14" height="67.5" fill="#ffa628"/>
<rect x="274.9" y="553.5" width="21.1" height="67.5" fill="#ffa628"/>
<rect x="360" y="553.5" width="13.8" height="67.5" fill="#ffa628"/>
<rect x="441.8" y="553.5" width="17.1" height="67.5" fill="#ffa628"/>
<rect x="537.8" y="553.5" width="83.3" height="67.5" fill="#ffa628"/>
<rect x="728.2" y="553.5" width="30.7" height="67.5" fill="#ffa628"/>
<rect x="773.8" y="553.5" width="127.3" height="67.5" fill="#ffa628"/>
<rect x="1000" y="553.5" width="36.7" height="67.5" fill="#ffa628"/>
<rect x="1175" y="553.5" width="98.7" height="67.5" fill="#ffa628"/>
<rect x="915" y="486" width="1" height="67" fill="#000"/>
<rect x="923" y="486" width="1" height="67" fill="#000"/>
<rect x="961" y="486" width="1" height="67" fill="#000"/>
<rect x="982" y="486" width="1" height="67" fill="#000"/>
<rect x="1131" y="486" width="1" height="67" fill="#000"/>
<rect x="1136" y="486" width="1" height="67" fill="#000"/>
<rect x="1138" y="486" width="1" height="67" fill="#000"/>
<rect x="1144" y="486" width="1" height="67" fill="#000"/>
<rect x="1152" y="486" width="1" height="67" fill="#000"/>
<rect x="1154" y="486" width="1" height="67" fill="#000"/>
<rect x="1162" y="486" width="1" height="67" fill="#000"/>
<rect x="1163" y="486" width="1" height="67" fill="#000"/>
<rect x="1168" y="486" width="1" height="67" fill="#000"/>
<rect x="1276" y="486" width="1" height="67" fill="#000"/>
<rect x="591" y="554" width="1" height="67" fill="#000"/>
<rect x="834" y="554" width="1" height="67" fill="#000"/>
<rect x="836" y="554" width="1" height="67" fill="#000"/>
<rect x="838" y="554" width="1" height="67" fill="#000"/>
<rect x="840" y="554" width="1" height="67" fill="#000"/>
<rect x="842" y="554" width="1" height="67" fill="#000"/>
<rect x="843" y="554" width="1" height="67" fill="#000"/>
<rect x="847" y="554" width="1" height="67" fill="#000"/>
<rect x="850" y="554" width="1" height="67" fill="#000"/>
<rect x="851" y="554" width="1" height="67" fill="#000"/>
<rect x="854" y="554" width="1" height="67" fill="#000"/>
<rect x="855" y="554" width="1" height="67" fill="#000"/>
<rect x="857" y="554" width="1" height="67" fill="#000"/>
<rect x="859" y="554" width="1" height="67" fill="#000"/>
<rect x="860" y="554" width="1" height="67" fill="#000"/>
<rect x="863" y="554" width="1" height="67" fill="#000"/>
<rect x="865" y="554" width="1" height="67" fill="#000"/>
<rect x="888" y="554" width="1" height="67" fill="#000"/>
<rect x="1011" y="554" width="1" height="67" fill="#000"/>
<rect x="1190" y="554" width="1" height="67" fill="#000"/>
<rect x="1200" y="554" width="1" height="67" fill="#000"/>
<rect x="1213" y="554" width="1" height="67" fill="#000"/>
<rect x="1243" y="554" width="1" height="67" fill="#000"/>
<rect x="1" y="553" width="1350" height="1.3" fill="#3030ff"/>
<rect x="1352" y="486" width="4" height="1" fill="#6699ff"/>
<g clip-path="url(#p4)">
<rect x="3.7" y="620" width="78.6" height="39.3" rx="4" fill="#5f4d2b" stroke="#a88a4a" stroke-width="1.4"/>
<rect x="98.7" y="620" width="78.6" height="39.3" rx="4" fill="#5f4d2b" stroke="#a88a4a" stroke-width="1.4"/>
<rect x="178.7" y="620" width="65.6" height="39.3" rx="4" fill="#5f4d2b" stroke="#a88a4a" stroke-width="1.4"/>
<rect x="245.7" y="620" width="68.6" height="39.3" rx="4" fill="#5f4d2b" stroke="#a88a4a" stroke-width="1.4"/>
<rect x="315.7" y="620" width="60.6" height="39.3" rx="4" fill="#5f4d2b" stroke="#a88a4a" stroke-width="1.4"/>
<rect x="377.7" y="620" width="21.6" height="39.3" rx="4" fill="#5f4d2b" stroke="#a88a4a" stroke-width="1.4"/>
<rect x="402.7" y="620" width="78.6" height="39.3" rx="4" fill="#5f4d2b" stroke="#a88a4a" stroke-width="1.4"/>
<rect x="497.7" y="620" width="78.6" height="39.3" rx="4" fill="#5f4d2b" stroke="#a88a4a" stroke-width="1.4"/>
<rect x="577.7" y="620" width="71.6" height="39.3" rx="4" fill="#5f4d2b" stroke="#a88a4a" stroke-width="1.4"/>
<rect x="688.7" y="620" width="79.6" height="39.3" rx="4" fill="#5f4d2b" stroke="#a88a4a" stroke-width="1.4"/>
<rect x="769.7" y="620" width="42.6" height="39.3" rx="4" fill="#5f4d2b" stroke="#a88a4a" stroke-width="1.4"/>
<path d="M2 680.59v1.35M8.6 678.64v2.41M15.2 679.2v2.48M17.4 678.93v3.08M19.6 678.87v2.05M21.8 677.95v1.38M28.4 681.01v2.18M37.2 680.81v1.98M39.4 680.03v2.04M41.6 677.9v2.68M46 679.36v2.4M52.6 686.67v1.93M61.4 685.48v2.09M65.8 684.83v1.97M70.2 682.73v2.12M72.4 682.73v1.49M81.2 677.54v1.48M87.8 673.08v3.57M91.7 661.98v10.16M93.4 660.8v5.24M95.1 658.23v7.43M103.6 662.43v9.54M105.3 659.22v10.06M107 657.59v8.33M108.7 657.65v8.14M112.1 660.34v4.37M113.8 658.86v4.22M122.3 668.3v10.48M129.1 673.92v11.69M130.8 683.01v10.28M132.5 674.47v10.66M144.4 668.75v8.25M147.8 673.03v9.51M149.5 677.28v10.35M159.7 694.38v9.09M161.4 695.39v7.69M164.8 696.11v4.24M166.5 696.07v9.64M175 718.58v8.74M185.2 756.3v11.36M190.3 777.12v11.46M192 768.55v13.64M193.7 764.32v17.21M200.5 780.19v14.95M202.2 776.32v12.14M205.6 768.49v8.88M207.3 764.97v8.01M210.7 757.01v6.46M212.4 751.91v10.32M220.9 769.85v6.33M222.6 771.31v10.27M227.7 775.44v10.33M229.4 774.51v6.35M232.8 770.26v10.88M234.5 768.84v5M237.9 761.44v9.72M241.3 753.24v11.48M246.4 771.13v5.83M249.8 768.69v7.63M253.2 765.45v9.81M268.5 810.56v15.44M270.2 803.38v16.73M275.3 782.46v5.19M277 779.43v5.68M283.8 783.46v14.68M285.5 775.99v15.34M287.2 771.68v14.35M290.6 779.06v11.18M292.3 790.01v10.26M294 797.56v14.84M304.2 790.96v10.36M307.6 789.2v9.64M309.3 789.63v6.27M311 787.14v4.75M314.4 782.27v6.74M321.2 768.6v12.15M324.6 772.45v9.53M329.7 778.75v6.8M331.4 771.38v11.61M334.8 770.96v8.82M336.5 771.89v4.35M338.2 767.64v8.22M345 778.07v12.6M348.4 788.69v9.45M355.2 784.34v9.9M358.6 779.83v6.1M365.4 778.86v9.27M367.1 783.89v8.7M368.8 783.93v8.38M370.5 786.94v6.8M375.6 791.36v9.72M377.3 796.08v6.34M379 796.63v9.99M380.7 794.45v4.87M382.4 790.28v8.88M384.1 791.2v7.11M394.3 811.71v9.61M396 811.32v10.12M397.7 809.54v8.38M401.1 803.18v10.1M402.8 802.04v10.27M404.5 799.33v6.25M406.2 796.7v5.79M409.6 785.27v11.29M413 782.07v9.02M416.4 791.63v6.95M421.5 790.11v11.02M423.2 783.15v9.15M424.9 778.42v9.08M426.6 773.15v8.93M428.3 766.43v11.88M430 766.42v8.26M431.7 770.26v13.14M433.4 778.55v13.58M436.8 774.06v8.06M438.5 768.8v10.79M440.2 764.9v8.48M441.9 755.28v16.55M445.3 753.47v10.28M448.7 750.75v12.52M455.5 765.35v11.9M457.2 775.34v9.63M460.6 787.29v10.03M462.3 783.43v7.13M465.7 772.92v10.08M469.1 775.92v11.43M472.5 784.5v8.06M474.2 789.9v8.02M475.9 793.96v12.24M482.7 797.68v14.12M484.4 789.63v11.35M491.2 809.89v13.99M494.6 818.47v9.27M499.7 803.18v9.31M503.1 798.23v6.78M504.8 796.81v11.93M506.5 805.91v17.72M509.9 829.78v16.44M511.6 834.56v11.62M513.3 839.74v9.55M515 841.85v4.83M516.7 841.2v6.58M518.4 841.51v8.74M520.1 835.44v8.39M525.2 815.65v11.11M530.3 820.76v6.56M532 821.63v9.88M533.7 814.53v16.8M537.1 788.71v9.74M540.5 801.16v10.05M542.2 805.87v7.8M547.3 786.34v8.64M549 780.47v9.77M550.7 775.26v11.46M555.8 784.76v7.04M557.5 787.82v6.2M559.2 787.87v8.22M564.3 760.66v21.46M571.1 762.28v6.05M572.8 763.94v5.67M576.2 765.61v9.92M577.9 756.31v10.5M579.6 747.63v13.46M581.3 742.88v6.98M583 740.23v8.47M588.1 734.62v8.59M589.8 731.01v9.24M593.2 725.32v7.32M596.6 722.57v9.14M601.7 736.68v9.54M603.4 740.86v6.74M611.9 723.64v6.91M623.8 738.48v5.55M625.5 731.67v8.86M627.2 728.36v8.38M628.9 719.37v17.84M632.3 718.26v7.28M635.7 722.79v9.51M637.4 726.28v9.86M639.1 731.93v8.04M642.5 734.74v7.76M652.7 747.04v8.67M654.4 743.56v8.55M662.9 742.42v7.24M664.6 740.7v9.79M668 741.45v9.77M671.4 745.31v7.42M674.8 750.01v7.58M683.3 745.79v11.52M691.8 759.35v10.55M693.5 764.03v11.13M698.6 772.88v6.31M702 776.66v9.25M703.7 781.1v7.51M710.5 783.81v11.72M715.6 776.47v11.05M717.3 768.83v13.53M722.4 764.52v14.34M724.1 753.31v17.57M729.2 758.92v7.58M730.9 761.96v7.4M732.6 755.36v7.55M734.3 750.37v8.11M739.4 744.01v11.99M741.1 753.14v10.49M742.8 758.33v12.47M746.2 754.38v8.68M749.6 746.74v9.15M751.3 747.93v13.38M754.7 756.05v11.27M756.4 764.02v11.33M758.1 768.88v5.35M768.3 768.4v8.57M771.7 755.87v9.65M773.4 756.9v8.7M778.5 767.3v12.91M781.9 748.7v12.45M783.6 736.44v19.98M787 739.99v4.41M791.9 743.33v2.64M793.4 741.23v6.05M794.9 743.85v2.06M797.9 743.01v2.79M799.4 742.81v1.65M800.9 741.87v2.93M802.4 741.71v2.8M808.4 747.55v3.66M811.4 750.14v2.55M814.4 749.45v2M815.9 746.88v5.34M817.4 747.91v2.32M818.9 747.81v3.09M821.9 747.15v1.69M823.4 746.22v2.16M824.9 745.9v2.92M830.9 750.98v1.77M833.9 750.76v1.71M835.4 750.2v1.76M836.9 750.38v1.56M838.4 749.88v2.17M841.4 749.76v2.8M842.9 749.37v2.03M845.9 748.92v2.82M847.4 750.09v1.83M848.9 750.42v1.91M850.4 751.69v1.82M853.4 751.94v2.98M860.9 753.64v2.43M862.4 754.31v2.79M863.9 753.9v2.09M866.9 752.54v3.29M868.4 752.29v4.67M869.9 753.87v2.24M871.4 753.51v1.42M877.4 756.21v3.95M878.9 759v4.9M881.9 765.39v5.54M883.4 766.67v3M886.4 764.19v3.14M889.4 763.38v3.33M892.4 766.02v2.83M893.9 766.01v6.33M902.9 776.79v2.97M904.4 778.42v1.63M905.9 777.57v2.25M908.9 777.85v2.56M911.9 776.61v2.89M913.4 776.86v2.08M914.9 777.7v1.38M916.4 777.14v1.79M917.9 776.67v1.56M920.9 775.33v3.05M923.9 774.43v2.94M928.4 775.38v2.27M931.4 775.1v2.97M934.4 776.27v2.28M946.4 783.3v1.63M947.9 782.4v2.88M949.4 783.15v2.45M953.9 782.39v2.29M958.4 782.4v2.52M959.9 779.5v5.95M964.4 784.94v2.55M971.9 788.8v2.7M974.9 789.36v2.65M976.4 790.47v1.84M979.4 790.62v2.12M980.9 790.19v2.9M982.4 789.92v2.59M983.9 789.5v2.81M985.4 790.56v2.21M988.4 789.47v2.53M989.9 789.83v2.5M991.4 789.52v2.44M992.9 788.9v1.79M994.4 788.07v1.89M995.9 787.37v2.33M998.9 786.2v2.73M1000.4 786.06v1.85M1001.9 785.28v2.79M1003.4 784.32v2.34M1004.9 783.74v2.51M1006.4 782.61v3.12M1009.4 781.84v2.12M1010.9 781.56v2.22M1012.4 780.93v2.9M1015.4 780.25v2.98M1016.9 780.07v2.51M1018.4 780.13v3.03M1025.9 780.31v2.72M1031.9 781.65v1.9M1033.4 781.47v2.1M1034.9 779.91v2.61M1036.4 779.68v2.55M1037.9 779.7v1.76M1040.9 778.27v4M1043.9 778.83v2.07M1048.4 780.25v2.91M1049.9 781.8v2.14M1057.4 791.12v5.02M1058.9 794.59v4.26M1063.4 788.26v3.43M1066.4 784.81v3.15M1070.9 784.43v2.86M1072.4 784.9v1.38M1079.9 796.15v3.82M1081.4 799.09v2.74M1090.4 804.02v1.48M1091.9 803.69v1.98M1099.4 805.06v1.71M1100.9 803.68v3.08M1106.9 801.35v2.12M1108.4 801.11v3.25M1109.9 802.79v3.82M1111.4 804.67v3.45M1112.9 806.88v2.66M1114.4 805.67v2.81M1117.4 801.97v3.49M1118.9 801.59v2.98M1120.4 800.2v3.15M1121.9 798.82v2.41M1123.4 797.55v2.6M1124.9 795.5v3.17M1126.4 795.56v2.23M1127.9 793.01v3.99M1129.4 793.13v2.84M1132.4 791.49v5.42M1133.9 791.27v1.92M1136.9 791.39v1.38M1138.4 791.37v1.47M1139.9 790.87v2.11M1144.4 792.31v3.8M1147.4 796.23v3M1150.4 800.9v2.7M1151.9 799.22v3.63M1153.4 798.22v3.04M1154.9 796.87v3.49M1156.4 795.94v3.6M1157.9 796.04v1.58M1162.4 796.24v1.95M1163.9 797.18v1.69M1165.4 796.01v2.68M1166.9 795.48v5.25M1168.4 796.63v2.9M1172.9 794.9v3.29M1175.9 793.98v2.66M1177.4 792.06v3.74M1178.9 792.67v2.62M1183.4 790.27v3.6M1190.9 796.36v2.98M1193.9 795.43v2.44M1195.4 795.5v2.41M1198.4 794.55v1.87M1205.9 791.02v7.18M1207.4 792.97v3.72M1211.9 796.7v3.13M1213.4 795.85v3.15M1214.9 795.76v2.83M1216.4 794.43v2.47M1217.9 794.27v3.05M1219.4 794.19v1.94M1220.9 793.36v2.34M1223.9 792.31v2.46M1225.4 792.19v1.95M1226.9 790.63v2.79M1237.4 787.57v3.55M1238.9 786.03v3.5M1240.4 783.08v4.77M1241.9 783.57v2.15M1244.9 784.73v1.99M1250.9 787.07v2.21M1259.9 792.67v3.27M1261.4 793.68v1.48M1262.9 793.19v2.11M1264.4 792.17v2.65M1267.4 792.53v1.52M1278.9 804.56v4.73M1280.6 811.73v31.42M1282.3 826.56v5.41M1284 825.75v6.66M1285.7 824.68v6.78M1295.9 828.19v8.61M1302.7 828.4v9.7M1304.4 833.85v4.84M1307.8 832.61v10.9M1309.5 828.56v6.98" stroke="#1a3cb4" stroke-width="1.1" fill="none"/>
<path d="M4.2 680.1v1.81M6.4 680.25v1.76M10.8 678.33v2.03M13 677.33v2.63M24 678.37v1.61M26.2 679.3v1.82M30.6 681.74v1.01M32.8 682.18v1.01M35 681.94v1.51M43.8 677.27v2.72M48.2 681.6v2.86M50.4 683.61v2.66M54.8 688.93v2.38M57 690.86v2.91M59.2 687.47v2.56M63.6 685.61v1.44M68 684.09v1.84M74.6 684.02v2.75M76.8 688.06v2.87M79 682.63v9.58M83.4 677.37v0.99M85.6 677.39v1.11M90 663.88v12.32M96.8 656.72v15.9M98.5 660.95v7.41M100.2 660.74v8.15M101.9 663.52v7.27M110.4 655.27v11.24M115.5 655.4v10.32M117.2 663.54v6.46M118.9 663.29v10.58M120.6 667.78v9.49M124 669.11v8.07M125.7 665.56v7.94M127.4 666.46v11.85M134.2 670.05v13.39M135.9 661.96v11.58M137.6 658.52v7.77M139.3 659.79v7.45M141 661.44v10.07M142.7 665.6v6.66M146.1 669.13v9.64M151.2 677.27v11.06M152.9 684.91v6.02M154.6 687.44v7.96M156.3 695.52v8.15M158 697.77v8.63M163.1 696.55v3.54M168.2 695.54v9.39M169.9 696.58v6.29M171.6 704.72v9.93M173.3 712.55v12.75M176.7 723.37v12.81M178.4 729.44v10.27M180.1 734.92v12.61M181.8 740.1v12.44M183.5 746.19v13.09M186.9 761.17v13.9M188.6 771.89v10.25M195.4 771.29v10.4M197.1 775.44v8.26M198.8 777.24v12.84M203.9 770.27v9.36M209 759.84v10.77M214.1 753.26v16.05M215.8 755.91v10.8M217.5 759.49v9.2M219.2 763.77v13.6M224.3 774.63v8.68M226 778.43v10.71M231.1 772.35v8.66M236.2 766.92v6.05M239.6 757.63v8.46M243 759.63v13.6M244.7 762.9v13.86M248.1 769.83v6.48M251.5 769.91v5.66M254.9 767.8v6.39M256.6 766.18v11.18M258.3 769.12v10.6M260 773.02v12.58M261.7 784.18v16.36M263.4 796.56v12.96M265.1 802.4v14.24M266.8 811.86v13.6M271.9 794.28v14.05M273.6 780.63v15.26M278.7 778.64v9.42M280.4 783.23v10.06M282.1 786.97v12.76M288.9 772.39v14.62M295.7 809.8v9.32M297.4 805.66v6.76M299.1 802.38v9.39M300.8 799.41v6.68M302.5 793.62v9.74M305.9 790.9v7.6M312.7 784.53v9.25M316.1 778.98v8.76M317.8 777.74v5.65M319.5 774.97v10.1M322.9 769.49v8.44M326.3 780.54v8.2M328 780.82v10.17M333.1 772.36v10.16M339.9 766.92v8.38M341.6 772.7v8.11M343.3 775.32v12.51M346.7 782.82v11M350.1 787.43v12.43M351.8 791.56v8.44M353.5 789.62v7.54M356.9 780.42v11.3M360.3 773.93v10.7M362 775.49v10.47M363.7 780.1v5.6M372.2 790.77v5.36M373.9 789.91v8.08M385.8 788.49v5.95M387.5 785.62v12.86M389.2 794.91v12.85M390.9 799.78v13.51M392.6 808.17v12.22M399.4 809.09v7.53M407.9 793.35v7.42M411.3 784.48v8.15M414.7 788.91v6.18M418.1 792.1v11.12M419.8 796.2v9.33M435.1 779.15v8.52M443.6 753.67v13.55M447 753.56v5.22M450.4 750.97v9.38M452.1 750.28v12.7M453.8 758.54v11.88M458.9 781.87v13.52M464 778.27v12.49M467.4 767.62v16.92M470.8 781.78v6.63M477.6 801.83v9.25M479.3 806.29v10.05M481 806.2v11.34M486.1 782.57v13.12M487.8 788.24v12.95M489.5 800.72v13.57M492.9 816.62v15.85M496.3 814.11v11.31M498 810.21v9.83M501.4 800.51v10.66M508.2 817.55v12.79M521.8 830v9.55M523.5 825.77v9.28M526.9 815.76v6.97M528.6 815.02v9.47M535.4 801.63v16.07M538.8 796.13v12.04M543.9 799.68v9.53M545.6 790.58v13.15M552.4 779.93v6.5M554.1 780.33v11.37M560.9 789.56v8.9M562.6 780.54v21.11M566 756.42v8.85M567.7 757.76v8.43M569.4 760.96v6.28M574.5 766.6v5.18M584.7 737.89v10.16M586.4 737.28v9.13M591.5 726.51v10.82M594.9 725.12v5.61M598.3 725.99v11.42M600 729.9v10.95M605.1 737.19v6.51M606.8 734.43v6.66M608.5 730.62v8.83M610.2 727.82v6.15M613.6 714.7v13.81M615.3 722.44v14.1M617 730.07v10.04M618.7 739.84v11.1M620.4 744.8v5.65M622.1 739.48v7.78M630.6 722.11v7.43M634 714.13v12.91M640.8 735.05v5.46M644.2 736.21v10.6M645.9 732.27v15.26M647.6 742.5v5.91M649.3 743.98v6.26M651 746.6v5.68M656.1 741.2v7.84M657.8 740.56v7.85M659.5 741.68v5.9M661.2 739.74v10.5M666.3 743.67v9.77M669.7 743.48v8.31M673.1 747.44v8.7M676.5 748.88v11.6M678.2 752.68v5.7M679.9 754.88v7.67M681.6 750.96v7.66M685 744.13v9.05M686.7 743.83v8.02M688.4 750.96v7.95M690.1 754.58v8.87M695.2 767.9v12.72M696.9 769.88v10.69M700.3 773.89v8.73M705.4 786.13v7.84M707.1 787.37v11.99M708.8 788.65v11M712.2 782.33v7.18M713.9 779.1v7.22M719 770.72v7.69M720.7 774.9v3.56M725.8 745.95v11.49M727.5 754.43v6.61M736 746.09v7.25M737.7 740.69v12.53M744.5 760.73v7.37M747.9 751.85v6.46M753 753.77v12.45M759.8 770.31v6.95M761.5 770.06v10.9M763.2 776.72v7.37M764.9 778.91v7.2M766.6 772.18v10.93M770 759.73v11.84M775.1 760.14v12.24M776.8 766.25v8.02M780.2 756.27v10.32M785.3 737.66v6.08M788.7 741.44v7.58M790.4 744.03v3.74M796.4 743.59v1.97M803.9 742.02v2.78M805.4 743.45v4.21M806.9 745.67v3.97M809.9 749.15v3.28M812.9 749.62v2.4M820.4 746.71v2.84M826.4 746.22v2.82M827.9 746.21v3.72M829.4 748.08v3.6M832.4 749.97v3.85M839.9 750.09v2.77M844.4 749.8v2.11M851.9 751.17v2.63M854.9 753.05v2.02M856.4 753.65v2.04M857.9 753.99v1.85M859.4 754.47v2.21M865.4 753.75v2.29M872.9 753.68v1.96M874.4 752.79v3.77M875.9 755.04v3.07M880.4 762.24v5.18M884.9 764.57v6.39M887.9 763.18v3.52M890.9 764.84v2.67M895.4 767.74v4.08M896.9 768.41v4.17M898.4 770.99v2.99M899.9 772.92v3.84M901.4 775.4v2.87M907.4 778.32v1.47M910.4 777.47v1.87M919.4 776.29v2.57M922.4 775.32v2.28M925.4 774.76v2.19M926.9 774.84v2.96M929.9 775.56v2.62M932.9 775.76v2.01M935.9 776.79v1.89M937.4 777.11v1.6M938.9 777.66v3.84M940.4 777.99v3.57M941.9 780.19v2.7M943.4 781.15v3.18M944.9 782.78v2.76M950.9 782.18v2.62M952.4 782.97v1.35M955.4 782.56v1.42M956.9 781.85v2.71M961.4 781.81v3.69M962.9 784.16v3.08M965.9 786.13v3.53M967.4 787.33v2.73M968.9 787.61v2.97M970.4 788.56v1.92M973.4 787.69v5.69M977.9 790.24v2.03M986.9 790.13v1.61M997.4 787.52v1.76M1007.9 781.85v2.55M1013.9 780.47v2.53M1019.9 779.6v2.13M1021.4 780.06v1.88M1022.9 777.77v5.31M1024.4 780.22v2.15M1027.4 781.4v2.42M1028.9 780.75v2.77M1030.4 782.02v1.96M1039.4 778.89v2.96M1042.4 778.52v2.28M1045.4 779.07v2.97M1046.9 780.76v1.83M1051.4 781.35v3.09M1052.9 783.4v2.14M1054.4 784.07v5.99M1055.9 788.52v5.77M1060.4 790v6.8M1061.9 791.22v3.74M1064.9 786.83v2.97M1067.9 784.7v1.72M1069.4 784.86v1.77M1073.9 784.24v4.28M1075.4 787.32v4.84M1076.9 790.3v4.41M1078.4 793.73v4.64M1082.9 799.66v3.09M1084.4 800.52v2.48M1085.9 801.67v3.34M1087.4 802.32v2.14M1088.9 802.47v2.24M1093.4 803.37v2.86M1094.9 803.57v2.29M1096.4 804v2.43M1097.9 804.86v1.89M1102.4 803.27v2.02M1103.9 802.83v3.02M1105.4 802.04v3.14M1115.9 803.54v2.66M1130.9 793.34v1.93M1135.4 791.43v1.26M1141.4 791.35v1.26M1142.9 790.69v2.95M1145.9 793.34v4.07M1148.9 798.47v4.19M1159.4 796.42v1.81M1160.9 796.46v2.08M1169.9 796.01v2.25M1171.4 795.21v2.49M1174.4 794.4v1.8M1180.4 791.6v3.69M1181.9 791.32v1.85M1184.9 791.72v3.44M1186.4 793.28v3.66M1187.9 794.97v3.52M1189.4 795.76v3.04M1192.4 796.01v3.22M1196.9 793.31v4.83M1199.9 793.79v2.86M1201.4 792.57v3.05M1202.9 792.49v2.41M1204.4 790.92v5.53M1208.9 795.3v3.23M1210.4 796.93v2.55M1222.4 792.78v1.86M1228.4 790.6v3.45M1229.9 792.1v3.51M1231.4 792.89v3.51M1232.9 794.9v3.75M1234.4 793.4v4.39M1235.9 790.3v4.64M1243.4 784.65v1.73M1246.4 784.6v4.46M1247.9 785.87v1.74M1249.4 786.42v2.26M1252.4 788.37v2.17M1253.9 787.64v3.6M1255.4 789.06v3.22M1256.9 790.53v3.08M1258.4 791.41v2.84M1265.9 792.66v1.41M1268.9 792.52v4.6M1270.4 794.13v8.29M1272.1 796.71v6.21M1273.8 800.65v5.35M1275.5 803.32v4.98M1277.2 803.05v8.8M1287.4 823.06v7.49M1289.1 821.75v6.75M1290.8 822.83v11.24M1292.5 826.68v4.85M1294.2 828.11v5.19M1297.6 830.18v5.99M1299.3 829.7v6.45M1301 831.59v5.24M1306.1 834.19v6.39" stroke="#c8101c" stroke-width="1.1" fill="none"/>
<rect x="114" y="691.9" width="18" height="1.3" fill="#2f9bff"/>
<rect x="132" y="696.4" width="18" height="1.3" fill="#2f9bff"/>
<rect x="160" y="726" width="15" height="1.3" fill="#2f9bff"/>
<rect x="163" y="748.4" width="17" height="1.3" fill="#2f9bff"/>
<rect x="258" y="783.8" width="12" height="1.3" fill="#2f9bff"/>
<rect x="245" y="809.4" width="15" height="1.3" fill="#2f9bff"/>
<rect x="279" y="817.4" width="14" height="1.3" fill="#2f9bff"/>
<rect x="342" y="777" width="16" height="1.3" fill="#2f9bff"/>
<rect x="331" y="799.4" width="17" height="1.3" fill="#2f9bff"/>
<rect x="356" y="800.4" width="15" height="1.3" fill="#2f9bff"/>
<rect x="380" y="825.2" width="13.5" height="1.3" fill="#2f9bff"/>
<rect x="429" y="748.4" width="11" height="1.3" fill="#2f9bff"/>
<rect x="425" y="756.4" width="14" height="1.3" fill="#2f9bff"/>
<rect x="441.5" y="793.8" width="16.5" height="1.3" fill="#2f9bff"/>
<rect x="493" y="846.4" width="15" height="1.3" fill="#2f9bff"/>
<rect x="520.6" y="788.8" width="15" height="1.3" fill="#2f9bff"/>
<rect x="549.4" y="756.6" width="16.3" height="1.3" fill="#2f9bff"/>
<rect x="563.7" y="743.6" width="17.1" height="1.3" fill="#2f9bff"/>
<rect x="574.5" y="724.8" width="13.8" height="1.3" fill="#2f9bff"/>
<rect x="575.8" y="714.2" width="12.5" height="1.3" fill="#2f9bff"/>
<rect x="603.4" y="751.6" width="15.1" height="1.3" fill="#2f9bff"/>
<rect x="637" y="756.6" width="15.6" height="1.3" fill="#2f9bff"/>
<rect x="675.2" y="775.7" width="15.1" height="1.3" fill="#2f9bff"/>
<rect x="711" y="750.6" width="13" height="1.3" fill="#2f9bff"/>
<rect x="756.8" y="751.6" width="15.1" height="1.3" fill="#2f9bff"/>
<rect x="741.8" y="779.4" width="15" height="1.3" fill="#2f9bff"/>
<rect x="121" y="656.4" width="17" height="1.3" fill="#2f9bff"/>
<use href="#adn" transform="translate(43.5 667.5)" fill="url(#gor)" stroke="#ffe080" stroke-width="0.6"/>
<use href="#aup" transform="translate(7.5 693.5)" fill="url(#gup)" stroke="#e0ecff" stroke-width="0.6"/>
<use href="#aup" transform="translate(52.5 697.5)" fill="url(#gup)" stroke="#e0ecff" stroke-width="0.6"/>
<use href="#xx" transform="translate(52.5 716)" stroke="#9cbcff"/>
<use href="#aup" transform="translate(131 696.5)" fill="url(#gbr)" stroke="#a8e4ff" stroke-width="0.7"/>
<use href="#aup" transform="translate(152 705)" fill="url(#gup)" stroke="#e0ecff" stroke-width="0.6"/>
<use href="#aup" transform="translate(152 701)" fill="url(#gbr)" stroke="#a8e4ff" stroke-width="0.7"/>
<use href="#xx" transform="translate(152 725)" stroke="#9cbcff"/>
<use href="#aup" transform="translate(177.6 728.8)" fill="url(#gbr)" stroke="#a8e4ff" stroke-width="0.7"/>
<rect x="181" y="741" width="11" height="11" rx="2.5" fill="url(#gor)" stroke="#ffe080" stroke-width="0.6"/>
<use href="#aup" transform="translate(180 751)" fill="url(#gbr)" stroke="#a8e4ff" stroke-width="0.7"/>
<use href="#xx" transform="translate(275.5 752.2)" stroke="#ffb02c"/>
<use href="#adn" transform="translate(275 771.5)" fill="url(#gor)" stroke="#ffe080" stroke-width="0.6"/>
<use href="#adn" transform="translate(274 780)" fill="url(#gbr)" stroke="#a8e4ff" stroke-width="0.7"/>
<use href="#aup" transform="translate(263 818)" fill="url(#gup)" stroke="#e0ecff" stroke-width="0.6"/>
<use href="#aup" transform="translate(262.6 812.8)" fill="url(#gbr)" stroke="#a8e4ff" stroke-width="0.7"/>
<use href="#aup" transform="translate(295 820)" fill="url(#gbr)" stroke="#a8e4ff" stroke-width="0.7"/>
<use href="#xx" transform="translate(296 836)" stroke="#9cbcff"/>
<rect x="312.4" y="759" width="14" height="6" rx="1" fill="url(#gor)"/>
<use href="#xx" transform="translate(360.5 749)" stroke="#ffb02c"/>
<use href="#adn" transform="translate(359.6 766)" fill="url(#gor)" stroke="#ffe080" stroke-width="0.6"/>
<use href="#adn" transform="translate(358.5 773)" fill="url(#gbr)" stroke="#a8e4ff" stroke-width="0.7"/>
<use href="#aup" transform="translate(348 808)" fill="url(#gup)" stroke="#e0ecff" stroke-width="0.6"/>
<use href="#aup" transform="translate(347.7 803)" fill="url(#gbr)" stroke="#a8e4ff" stroke-width="0.7"/>
<use href="#aup" transform="translate(373.5 808)" fill="url(#gup)" stroke="#e0ecff" stroke-width="0.6"/>
<use href="#aup" transform="translate(373.5 803)" fill="url(#gbr)" stroke="#a8e4ff" stroke-width="0.7"/>
<use href="#xx" transform="translate(374 828.5)" stroke="#9cbcff"/>
<use href="#aup" transform="translate(393.5 828)" fill="url(#gbr)" stroke="#a8e4ff" stroke-width="0.7"/>
<use href="#aup" transform="translate(395 840)" fill="url(#gbr)" stroke="#a8e4ff" stroke-width="0.7"/>
<use href="#xx" transform="translate(442.7 730)" stroke="#ffb02c"/>
<use href="#adn" transform="translate(443 748)" fill="url(#gor)" stroke="#ffe080" stroke-width="0.6"/>
<use href="#adn" transform="translate(445 745)" fill="url(#gbr)" stroke="#a8e4ff" stroke-width="0.7"/>
<use href="#adn" transform="translate(441 754)" fill="url(#gbr)" stroke="#a8e4ff" stroke-width="0.7"/>
<use href="#aup" transform="translate(459.5 806)" fill="url(#gup)" stroke="#e0ecff" stroke-width="0.6"/>
<use href="#aup" transform="translate(459 796.5)" fill="url(#gbr)" stroke="#a8e4ff" stroke-width="0.7"/>
<use href="#xx" transform="translate(459.6 824)" stroke="#9cbcff"/>
<use href="#aup" transform="translate(508.5 849)" fill="url(#gbr)" stroke="#a8e4ff" stroke-width="0.7"/>
<use href="#xx" transform="translate(538.4 765)" stroke="#ffb02c"/>
<use href="#adn" transform="translate(538 780.5)" fill="url(#gor)" stroke="#ffe080" stroke-width="0.6"/>
<use href="#adn" transform="translate(538.3 786)" fill="url(#gbr)" stroke="#a8e4ff" stroke-width="0.7"/>
<use href="#adn" transform="translate(566.5 752)" fill="url(#gbr)" stroke="#a8e4ff" stroke-width="0.7"/>
<use href="#adn" transform="translate(583 740)" fill="url(#gbr)" stroke="#a8e4ff" stroke-width="0.7"/>
<rect x="586" y="737.5" width="11" height="11" rx="2.5" fill="url(#gsq)" stroke="#e0ecff" stroke-width="0.8"/>
<use href="#adn" transform="translate(594 721)" fill="url(#gbr)" stroke="#a8e4ff" stroke-width="0.7"/>
<use href="#adn" transform="translate(591 708)" fill="url(#gor)" stroke="#ffe080" stroke-width="0.6"/>
<use href="#adn" transform="translate(592.5 710.3)" fill="url(#gbr)" stroke="#a8e4ff" stroke-width="0.7"/>
<use href="#aup" transform="translate(621 761)" fill="url(#gup)" stroke="#e0ecff" stroke-width="0.6"/>
<use href="#aup" transform="translate(621 756)" fill="url(#gbr)" stroke="#a8e4ff" stroke-width="0.7"/>
<use href="#xx" transform="translate(622.4 778.4)" stroke="#9cbcff"/>
<use href="#aup" transform="translate(653.3 760)" fill="url(#gbr)" stroke="#a8e4ff" stroke-width="0.7"/>
<use href="#aup" transform="translate(692.4 779.5)" fill="url(#gbr)" stroke="#a8e4ff" stroke-width="0.7"/>
<use href="#xx" transform="translate(728.7 727.3)" stroke="#ffb02c"/>
<use href="#adn" transform="translate(728 744)" fill="url(#gor)" stroke="#ffe080" stroke-width="0.6"/>
<use href="#adn" transform="translate(728 746)" fill="url(#gbr)" stroke="#a8e4ff" stroke-width="0.7"/>
<use href="#adn" transform="translate(738.5 741)" fill="url(#gbr)" stroke="#a8e4ff" stroke-width="0.7"/>
<use href="#xx" transform="translate(774.4 730.5)" stroke="#ffb02c"/>
<use href="#adn" transform="translate(775 750)" fill="url(#gor)" stroke="#ffe080" stroke-width="0.6"/>
<use href="#adn" transform="translate(774 748)" fill="url(#gbr)" stroke="#a8e4ff" stroke-width="0.7"/>
<use href="#aup" transform="translate(758.8 788)" fill="url(#gup)" stroke="#e0ecff" stroke-width="0.6"/>
<use href="#aup" transform="translate(758.8 783)" fill="url(#gbr)" stroke="#a8e4ff" stroke-width="0.7"/>
<use href="#xx" transform="translate(759.4 805.4)" stroke="#9cbcff"/>
<use href="#aup" transform="translate(901.4 791)" fill="url(#gup)" stroke="#e0ecff" stroke-width="0.6"/>
<use href="#xx" transform="translate(901.4 810.7)" stroke="#9cbcff"/>
<use href="#xx" transform="translate(1000.2 758.7)" stroke="#ffb02c"/>
<use href="#adn" transform="translate(1000.4 777)" fill="url(#gor)" stroke="#ffe080" stroke-width="0.6"/>
<use href="#aup" transform="translate(1037.3 799.2)" fill="url(#gup)" stroke="#e0ecff" stroke-width="0.6"/>
<use href="#xx" transform="translate(1037.3 818.3)" stroke="#9cbcff"/>
<use href="#xx" transform="translate(1175.4 764.6)" stroke="#ffb02c"/>
<use href="#adn" transform="translate(1175.4 783.1)" fill="url(#gor)" stroke="#ffe080" stroke-width="0.6"/>
<use href="#aup" transform="translate(1274 817.8)" fill="url(#gup)" stroke="#e0ecff" stroke-width="0.6"/>
<use href="#xx" transform="translate(1274 835)" stroke="#9cbcff"/>
<path d="M133 654.5h10l-5 5z" fill="#2f9bff"/>
</g>
</svg>
<div class="ht" style="left:24px">Germany 30 Cash (€1)</div>
<div class="ht" style="left:252px">1 minute</div>
<div class="ht" style="left:350px">11,686.8 (-0.41%)</div>
<div class="ht" style="left:529px">18-Oct-2018 07:38:41</div>
<div class="ht" style="right:3px">IT-Finance.com</div>
<div class="lbl" style="left:1px;top:30px;width:166px;color:#ffa628">Equity curve: #dev</div>
<div class="lbl" style="left:1px;top:269px;width:96px;color:#f4f4f4">FrecciaSU</div>
<div class="lbl" style="left:96px;top:269px;width:106px;color:#f4f4f4;letter-spacing:0.4px">FrecciaGIU</div>
<div class="lbl" style="left:1px;top:478px;width:138px;color:#6699ff;letter-spacing:0.13px">Positions: #dev</div>
<div class="lbl" style="left:1px;top:630px;width:50px;color:#ddd">Price</div>
<div class="lbl" style="left:50px;top:630px;width:249px;color:#f4f4f4;letter-spacing:0.29px">SCALPING INDICATOR V2</div>
<div class="lbl" style="left:298px;top:630px;width:528px;color:#f4f4f4;letter-spacing:0.32px">SCALPING INDICATOR V22 ( 6 6 16 13 0.994 0.994 3 3 t)</div>
<div class="lbl" style="left:825px;top:630px;width:134px;color:#ffa628;letter-spacing:0.25px">Orders display</div>
<div class="abs" style="left:1px;top:631px;width:1350px;height:235px;overflow:hidden">
<div class="tb" style="left:959px;top:-6px;width:81px">2 orders</div>
<div class="tb" style="left:1134px;top:-6px;width:81px">2 orders</div>
<div class="ob" style="left:12px;top:206px;width:80px">2 orders</div>
<div class="ob" style="left:-9px;top:206px;width:73px">1,817.5</div>
<div class="ob" style="left:112px;top:206px;width:80px">2 orders</div>
<div class="ob" style="left:257px;top:206px;width:80px">2 orders</div>
<div class="ob" style="left:206px;top:206px;width:115px">1@11,709.4</div>
<div class="ob" style="left:336px;top:206px;width:80px">2 orders</div>
<div class="ob" style="left:334px;top:206px;width:73px">1,717.2</div>
<div class="ob" style="left:419px;top:206px;width:80px">2 orders</div>
<div class="ob" style="left:583px;top:206px;width:80px">2 orders</div>
<div class="ob" style="left:534px;top:206px;width:115px">1@11,775.0</div>
<div class="ob" style="left:719px;top:206px;width:80px">2 orders</div>
<div class="ob" style="left:860px;top:206px;width:81px">2 orders</div>
<div class="ob" style="left:997px;top:206px;width:80px">2 orders</div>
<div class="ob" style="left:1233px;top:206px;width:81px">2 orders</div>
<div class="abs" style="left:2.5px;top:222px;font-size:11px;color:#e0e0e0;line-height:12px;transform:scaleY(1.15);transform-origin:0 0">©IT-Finance.com</div>
</div>
<svg class="abs" style="left:0;top:0" width="1440" height="900"><defs><linearGradient id="gbr2" x1="0" y1="0" x2="0" y2="1"><stop offset="0" stop-color="#4fb8ff"/><stop offset="1" stop-color="#1a86f2"/></linearGradient></defs><path transform="translate(395 840)" d="M0 -6.5 L6 0 L2.4 0 L2.4 6.5 L-2.4 6.5 L-2.4 0 L-6 0 Z" fill="url(#gbr2)" stroke="#a8e4ff" stroke-width="0.7"/></svg>
<div class="ax" style="left:1359px;top:75px;">10,100</div>
<div class="ax" style="left:1359px;top:143px;">10,050</div>
<div class="ax" style="left:1359px;top:209px;font-weight:bold;font-size:20.8px">10,000</div>
<div class="ax" style="left:1359px;top:273px;">1</div>
<div class="ax" style="left:1359px;top:363px;">0.5</div>
<div class="ax" style="left:1359px;top:543px;font-weight:bold">0</div>
<div class="ax" style="left:1359px;top:634px;">11,850</div>
<div class="ax" style="left:1359px;top:691px;">11,800</div>
<div class="ax" style="left:1359px;top:748px;">11,750</div>
<div class="ax" style="left:1359px;top:805px;">11,700</div>
<div class="abs" style="left:1356px;top:130px;width:65px;height:28px;background:linear-gradient(#3a3a3a,#0a0a0a);border:1px solid #555;color:#ffa628;font-size:20px;line-height:26px;padding-left:2px">10,056</div>
<div class="abs" style="left:1356px;top:438px;width:16px;height:12px;background:linear-gradient(#3a3a3a,#0a0a0a);border:1px solid #555;overflow:hidden"><div style="position:absolute;left:3px;top:6px;width:8px;height:8px;border-radius:50%;background:#eee"></div></div>
<div class="abs" style="left:1356px;top:447px;width:16px;height:29px;background:linear-gradient(#3a3a3a,#0a0a0a);border:1px solid #555;color:#fff;font-size:20px;line-height:26px;padding-left:2px">0</div>
<div class="abs" style="left:1356px;top:479px;width:16px;height:28px;background:linear-gradient(#3a3a3a,#0a0a0a);border:1px solid #555;color:#6699ff;font-size:20px;line-height:26px;padding-left:2px">1</div>
<div class="abs" style="left:1357px;top:817px;width:81px;height:27px;background:linear-gradient(#ffe640,#f0b400);border:1px solid #c09000;color:#000;font-size:20px;line-height:25px;padding-left:2px">11,686.8</div>
<div class="tl" style="left:88.5px;">08:00</div>
<div class="tl" style="left:188.5px;">10:00</div>
<div class="tl" style="left:288.5px;">12:00</div>
<div class="tl" style="left:388.5px;">14:00</div>
<div class="tl" style="left:488.5px;">16:00</div>
<div class="tl" style="left:588.5px;">18:00</div>
<div class="tl" style="left:688.5px;">20:00</div>
<div class="tl" style="left:788.5px;">22:00</div>
<div class="tl" style="left:889.5px;font-weight:bold;font-size:21px">18</div>
<div class="tl" style="left:989.5px;">02:00</div>
<div class="tl" style="left:1089.5px;">04:00</div>
<div class="tl" style="left:1189.5px;">06:00</div>
</body></html>
